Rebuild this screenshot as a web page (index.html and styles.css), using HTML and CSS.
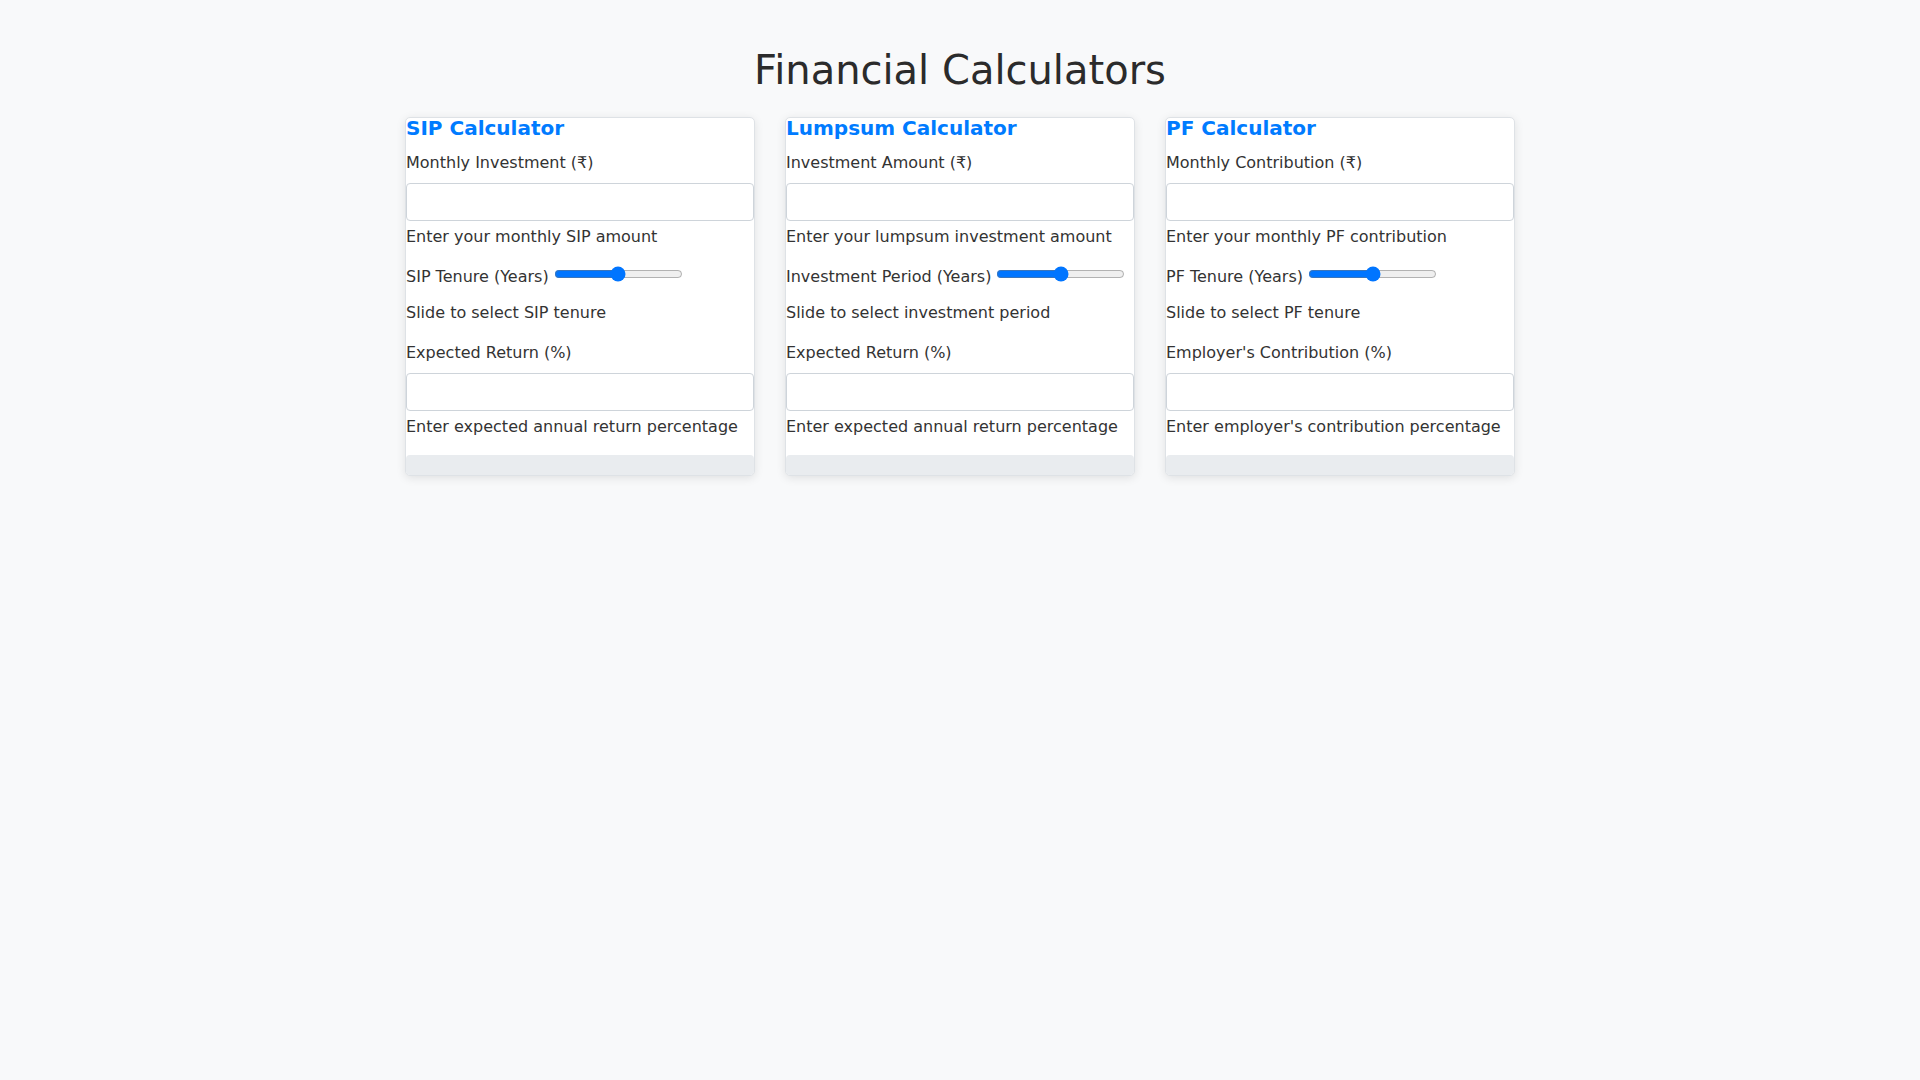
FILE: index.html
```html
<!DOCTYPE html>
<html lang="en">
<head>
    <meta charset="UTF-8">
    <meta name="viewport" content="width=device-width, initial-scale=1.0">
    <title>Financial Calculators</title>
    <link rel="stylesheet" href="styles.css">
</head>
<body>
    <div class="container">
        <h1 class="page-title">Financial Calculators</h1>

        <div class="calc-row">
            <!-- SIP -->
            <div class="calc-card">
                <h3 class="calc-title">SIP Calculator</h3>
                <div class="form-group">
                    <label for="sip-amount">Monthly Investment (₹)</label>
                    <input type="number" class="form-control" id="sip-amount">
                    <small class="form-text">Enter your monthly SIP amount</small>
                </div>
                <div class="form-group">
                    <label for="sip-tenure">SIP Tenure (Years)</label>
                    <input type="range" class="range" id="sip-tenure">
                    <small class="form-text">Slide to select SIP tenure</small>
                </div>
                <div class="form-group">
                    <label for="sip-return">Expected Return (%)</label>
                    <input type="number" class="form-control" id="sip-return">
                    <small class="form-text">Enter expected annual return percentage</small>
                </div>
                <div class="result" id="sip-result"></div>
            </div>

            <!-- Lumpsum -->
            <div class="calc-card">
                <h3 class="calc-title">Lumpsum Calculator</h3>
                <div class="form-group">
                    <label for="lump-amount">Investment Amount (₹)</label>
                    <input type="number" class="form-control" id="lump-amount">
                    <small class="form-text">Enter your lumpsum investment amount</small>
                </div>
                <div class="form-group">
                    <label for="lump-period">Investment Period (Years)</label>
                    <input type="range" class="range" id="lump-period">
                    <small class="form-text">Slide to select investment period</small>
                </div>
                <div class="form-group">
                    <label for="lump-return">Expected Return (%)</label>
                    <input type="number" class="form-control" id="lump-return">
                    <small class="form-text">Enter expected annual return percentage</small>
                </div>
                <div class="result" id="lump-result"></div>
            </div>

            <!-- PF -->
            <div class="calc-card">
                <h3 class="calc-title">PF Calculator</h3>
                <div class="form-group">
                    <label for="pf-amount">Monthly Contribution (₹)</label>
                    <input type="number" class="form-control" id="pf-amount">
                    <small class="form-text">Enter your monthly PF contribution</small>
                </div>
                <div class="form-group">
                    <label for="pf-tenure">PF Tenure (Years)</label>
                    <input type="range" class="range" id="pf-tenure">
                    <small class="form-text">Slide to select PF tenure</small>
                </div>
                <div class="form-group">
                    <label for="pf-employer">Employer's Contribution (%)</label>
                    <input type="number" class="form-control" id="pf-employer">
                    <small class="form-text">Enter employer's contribution percentage</small>
                </div>
                <div class="result" id="pf-result"></div>
            </div>
        </div>
    </div>
</body>
</html>
```

FILE: styles.css
```css
body {
    margin: 0;
    padding: 0;
    background: #f8f9fa;
    color: #333;
    font-family: "DejaVu Sans", Verdana, sans-serif;
    font-size: 16px;
    line-height: 1.5;
}

.container {
    max-width: 1110px;
    margin: 0 auto;
    padding: 46px 15px 20px;
}

.page-title {
    text-align: center;
    font-size: 40px;
    font-weight: 400;
    line-height: 1.2;
    margin: 0 0 23px;
    color: #2b2b2b;
}

.calc-row {
    display: grid;
    grid-template-columns: repeat(3, 1fr);
    gap: 30px;
    align-items: start;
}

.calc-card {
    background: #fff;
    border: 1px solid #dee2e6;
    border-radius: 5px;
    box-shadow: 0 2px 10px rgba(0, 0, 0, 0.1);
}

.calc-title {
    color: #007bff;
    font-size: 20px;
    font-weight: bold;
    line-height: 20px;
    margin: 0 0 13px;
}

.form-group {
    margin-bottom: 16px;
}

.form-group:first-of-type {
    margin-bottom: 15px;
}

label {
    display: inline-block;
    margin-bottom: 8px;
}

.form-control {
    display: block;
    width: 100%;
    height: 38px;
    box-sizing: border-box;
    padding: 6px 12px;
    font: inherit;
    border: 1px solid #ced4da;
    border-radius: 4px;
    background: #fff;
    margin: 0;
}

.range {
    margin-left: 0;
}

.form-text {
    display: block;
    margin-top: 4px;
    font-size: 16px;
}

.result {
    background: #e9ecef;
    padding: 10px;
    border-radius: 4px;
    margin-top: 1px;
}
```
